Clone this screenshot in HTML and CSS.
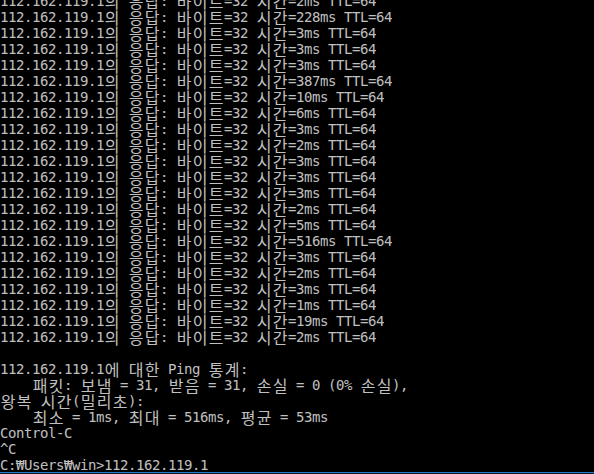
FILE: index.html
```html
<!DOCTYPE html>
<html lang="ko">
<head>
    <meta charset="UTF-8">
    <title>명령 프롬프트 - ping</title>
    <link rel="stylesheet" href="styles.css">
</head>
<body>

<div class="console">
    <div class="output" id="output"></div>
</div>
<div class="taskbar"></div>

<script>
    const times = [2, 228, 3, 3, 3, 387, 10, 6, 3, 2, 3, 3, 3, 2, 5, 516, 3, 2, 3, 1, 19, 2];

    const lines = times.map(t => `112.162.119.1의 응답: 바이트=32 시간=${t}ms TTL=64`);
    lines.push(
        "",
        "112.162.119.1에 대한 Ping 통계:",
        "    패킷: 보냄 = 31, 받음 = 31, 손실 = 0 (0% 손실),",
        "왕복 시간(밀리초):",
        "    최소 = 1ms, 최대 = 516ms, 평균 = 53ms",
        "Control-C",
        "^C",
        "C:₩Users₩win>112.162.119.1"
    );

    const outputElement = document.getElementById('output');

    // hangul takes two console cells, so every syllable gets its own 16px box
    lines.forEach(text => {
        const line = document.createElement('div');
        line.className = 'line';
        for (const ch of text) {
            if (/[\uAC00-\uD7A3]/.test(ch)) {
                const cell = document.createElement('span');
                cell.className = 'k';
                cell.textContent = ch;
                line.appendChild(cell);
            } else {
                line.appendChild(document.createTextNode(ch));
            }
        }
        if (text === '') line.textContent = ' ';
        outputElement.appendChild(line);
    });
</script>

</body>
</html>
```

FILE: styles.css
```css
body {
    margin: 0;
    padding: 0;
    background-color: #000;
    overflow: hidden;
}

.console {
    height: 472px;
    overflow: hidden;
    background-color: #000;
    color: #c0c0c0;
    font-family: "DejaVu Sans Mono", monospace;
    font-size: 14px;
    letter-spacing: -0.43px;
}

.output {
    margin-top: -7px;
}

.line {
    height: 16px;
    line-height: 16px;
    white-space: pre;
}

.k {
    display: inline-block;
    width: 16px;
    height: 16px;
    text-align: center;
    font-family: "Noto Sans CJK KR", sans-serif;
    font-size: 16px;
    line-height: 16px;
    letter-spacing: 0;
    vertical-align: top;
}

.taskbar {
    height: 1px;
    border-top: 1px solid #1f7ad4;
    background-color: #14181e;
}
```
